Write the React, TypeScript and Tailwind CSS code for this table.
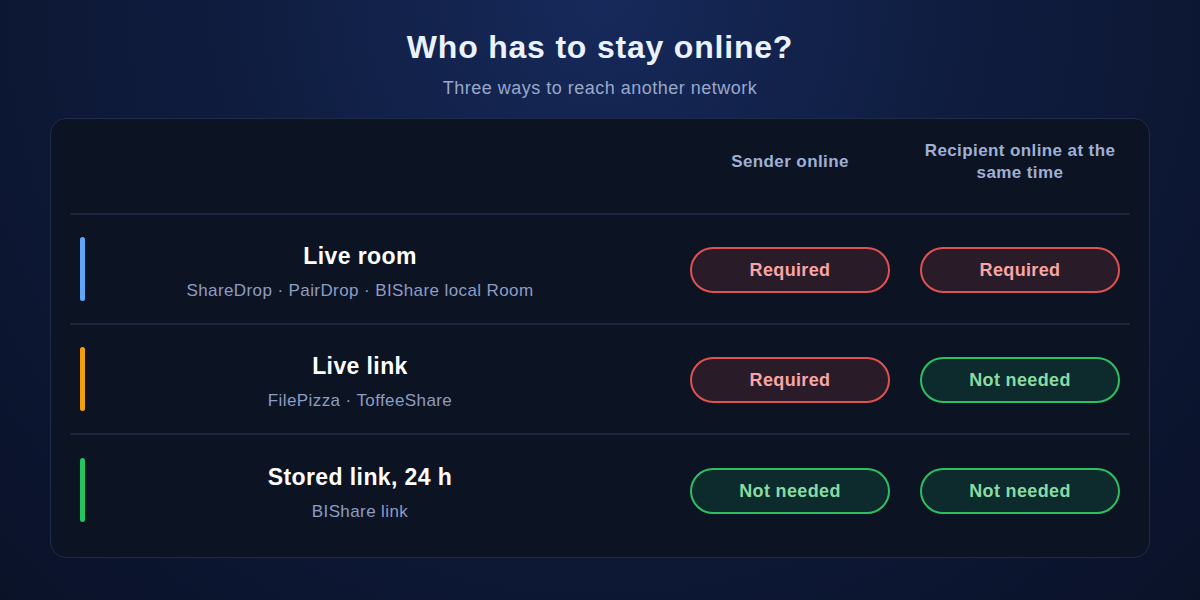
const rows = [
  { name: "Live room", tools: "ShareDrop · PairDrop · BIShare local Room", bar: "bg-[#60a5fa]", sender: true, recipient: true },
  { name: "Live link", tools: "FilePizza · ToffeeShare", bar: "bg-[#f59e0b]", sender: true, recipient: false },
  { name: "Stored link, 24 h", tools: "BIShare link", bar: "bg-[#22c55e]", sender: false, recipient: false },
];

const Pill = ({ required }: { required: boolean }) =>
  required ? (
    <div className="w-[200px] h-[46px] rounded-full border-2 border-[#e05252] bg-[#2a1b29] flex items-center justify-center text-[18px] tracking-[0.35px] font-bold text-[#f8a5a5]">
      Required
    </div>
  ) : (
    <div className="w-[200px] h-[46px] rounded-full border-2 border-[#2fbf63] bg-[#0d2a2c] flex items-center justify-center text-[18px] tracking-[0.35px] font-bold text-[#86dca4]">
      Not needed
    </div>
  );

export default function App() {
  return (
    <div
      className="w-[1200px] h-[600px] overflow-hidden bg-[radial-gradient(ellipse_at_50%_0%,#16295a_0%,#0f1c3e_45%,#0a1228_100%)] flex flex-col items-center"
      style={{ fontFamily: '"Liberation Sans", Arial, sans-serif' }}
    >
      <h1 className="mt-[27px] text-[32px] leading-[40px] tracking-[0.8px] font-bold text-[#eaf1ff]">Who has to stay online?</h1>
      <p className="mt-[11px] text-[18px] leading-[20px] tracking-[0.5px] text-[#9aa8cc]">Three ways to reach another network</p>

      <div className="mt-[20px] w-[1100px] rounded-[16px] border border-[#1f2b47] bg-[#0c1424] px-[19px] pb-[12px]">
        <div className="h-[96px] flex items-center border-b-2 border-[#1b2640] pb-[8px] px-[10px]">
          <div className="flex-1" />
          <div className="w-[200px] text-center text-[17px] leading-[22px] tracking-[0.4px] font-bold text-[#9fb0d6]">Sender online</div>
          <div className="w-[200px] ml-[30px] text-center text-[17px] leading-[22px] tracking-[0.4px] font-bold text-[#9fb0d6]">
            Recipient online at the same time
          </div>
        </div>

        {rows.map((row, i) => (
          <div
            key={row.name}
            className={`h-[110px] flex items-center px-[10px] ${i < rows.length - 1 ? "border-b-2 border-[#1b2640]" : ""}`}
          >
            <div className={`w-[5px] h-[64px] rounded-full ${row.bar}`} />
            <div className="flex-1 mr-[55px] pt-[4px] text-center">
              <div className="text-[23px] leading-[28px] tracking-[0.4px] font-bold text-white">{row.name}</div>
              <div className="mt-[11px] text-[17px] leading-[20px] tracking-[0.4px] text-[#8e9cc2]">{row.tools}</div>
            </div>
            <div className="mt-[2px]">
              <Pill required={row.sender} />
            </div>
            <div className="ml-[30px] mt-[2px]">
              <Pill required={row.recipient} />
            </div>
          </div>
        ))}
      </div>
    </div>
  );
}
